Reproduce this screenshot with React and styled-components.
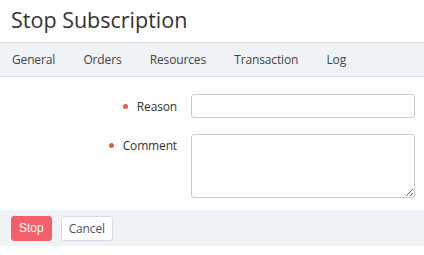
import React from "react";
import styled, { createGlobalStyle } from "styled-components";

const Global = createGlobalStyle`
  body {
    margin: 0;
    background: #fff;
    font-family: "Open Sans", "Liberation Sans", sans-serif;
    color: #333;
  }
`;

const Page = styled.div`
  width: 424px;
  height: 255px;
  display: flex;
  flex-direction: column;
`;

const Title = styled.h1`
  margin: 0;
  height: 42px;
  padding-left: 11px;
  font-size: 21.5px;
  font-weight: 400;
  line-height: 39px;
  color: #333;
  border-bottom: 1px solid #d9dee4;
`;

const Tabs = styled.div`
  display: flex;
  align-items: center;
  gap: 28.3px;
  height: 33px;
  padding-left: 12px;
  background: #eff3f6;
  border-bottom: 1px solid #d9dee4;
`;

const Tab = styled.span`
  font-size: 12px;
  letter-spacing: -0.15px;
  color: #444;
`;

const Form = styled.div`
  display: grid;
  grid-template-columns: 177px 224px;
  column-gap: 14px;
  row-gap: 16px;
  padding: 17px 0 12px;
`;

const Label = styled.label`
  display: flex;
  justify-content: flex-end;
  align-items: center;
  gap: 9px;
  height: ${(p) => (p.top ? "22px" : "24px")};
  font-size: 12px;
  letter-spacing: -0.15px;
  color: #333;
  &::before {
    content: "";
    width: 5px;
    height: 5px;
    border-radius: 50%;
    background: #f05a3c;
  }
`;

const Input = styled.input`
  box-sizing: border-box;
  width: 224px;
  height: 24px;
  margin: 0;
  border: 1px solid #c7ccd2;
  border-radius: 3px;
  background: #fff;
`;

const TextArea = styled.textarea`
  box-sizing: border-box;
  width: 224px;
  height: 64px;
  margin: 0;
  border: 1px solid #c7ccd2;
  border-radius: 3px;
  background: #fff;
`;

const Footer = styled.div`
  display: flex;
  align-items: center;
  gap: 9px;
  height: 36px;
  padding-left: 11px;
  background: #eff3f6;
`;

const Button = styled.button`
  box-sizing: border-box;
  height: 25px;
  padding: 0 ${(p) => (p.primary ? "7px" : "7px")};
  border-radius: 3px;
  font-size: 12px;
  letter-spacing: ${(p) => (p.primary ? "0" : "-0.15px")};
  cursor: pointer;
  font-family: ${(p) =>
    p.primary ? '"Liberation Sans", Arial, sans-serif' : '"Open Sans", sans-serif'};
  color: ${(p) => (p.primary ? "#fff" : "#4a5560")};
  background: ${(p) => (p.primary ? "#f2606a" : "#fff")};
  border: 1px solid ${(p) => (p.primary ? "#f2606a" : "#d5dbe0")};
`;

export default function App() {
  return (
    <Page>
      <Global />
      <Title>Stop Subscription</Title>
      <Tabs>
        {["General", "Orders", "Resources", "Transaction", "Log"].map((t) => (
          <Tab key={t}>{t}</Tab>
        ))}
      </Tabs>
      <Form>
        <Label>Reason</Label>
        <Input />
        <Label top>Comment</Label>
        <TextArea />
      </Form>
      <Footer>
        <Button primary>Stop</Button>
        <Button>Cancel</Button>
      </Footer>
    </Page>
  );
}
